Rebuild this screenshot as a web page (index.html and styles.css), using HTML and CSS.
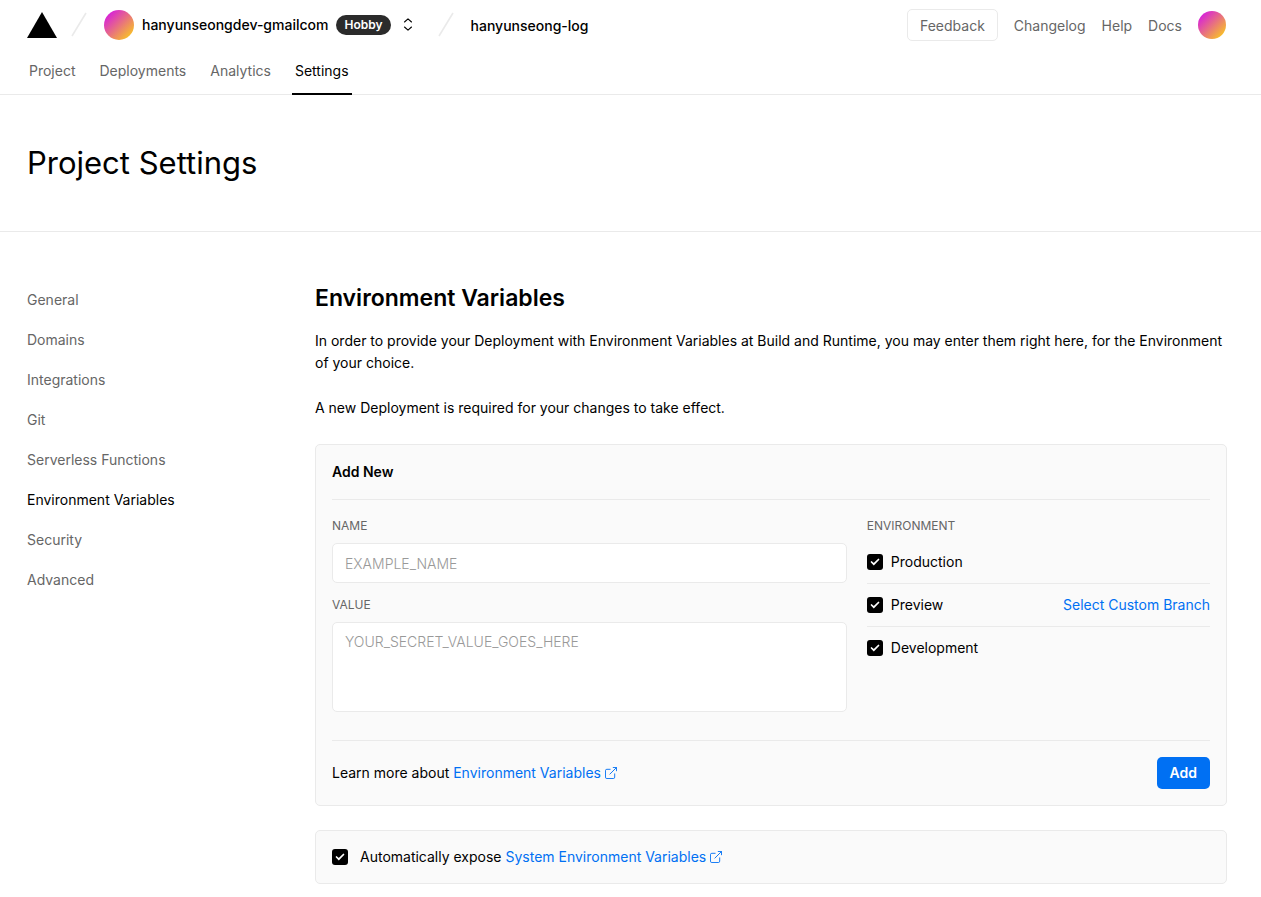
FILE: index.html
```
<!DOCTYPE html>
<html lang="en">
  <head>
    <meta charset="UTF-8" />
    <meta name="viewport" content="width=device-width, initial-scale=1.0" />
    <title>Project Settings</title>
    <link rel="stylesheet" href="styles.css">
  </head>
  <body>
    <header class="header">
      <div class="topbar">
        <a href="#" class="logo" aria-label="Home">
          <svg width="30" height="26" viewBox="0 0 30 26"><path d="M15 0L30 26H0z" fill="#000" /></svg>
        </a>
        <svg class="slash" width="16" height="26" viewBox="0 0 16 26"><path d="M15 1L1 24" stroke="#eaeaea" stroke-width="1.6" fill="none" /></svg>
        <a href="#" class="team">
          <span class="avatar"></span>
          <span>hanyunseongdev-gmailcom</span>
          <span class="badge">Hobby</span>
        </a>
        <button class="switcher" aria-label="Switch team">
          <svg width="10" height="14" viewBox="0 0 10 14" fill="none" stroke="#000" stroke-width="1.1" stroke-linecap="round" stroke-linejoin="round"><path d="M1.500 4L5 .8 8.500 4M1.500 9L5 12.200 8.500 9" /></svg>
        </button>
        <svg class="slash" width="16" height="26" viewBox="0 0 16 26"><path d="M15 1L1 24" stroke="#eaeaea" stroke-width="1.6" fill="none" /></svg>
        <a href="#" class="project">hanyunseong-log</a>
        <nav class="links">
          <button class="feedback">Feedback</button>
          <a href="#">Changelog</a>
          <a href="#">Help</a>
          <a href="#">Docs</a>
          <a href="#" class="avatar small" aria-label="Account"></a>
        </nav>
      </div>
      <nav class="tabs">
        <a href="#">Project</a>
        <a href="#">Deployments</a>
        <a href="#">Analytics</a>
        <a href="#" class="active">Settings</a>
      </nav>
    </header>

    <div class="title">
      <h1>Project Settings</h1>
    </div>

    <div class="layout">
      <nav class="sidebar">
        <a href="#">General</a>
        <a href="#">Domains</a>
        <a href="#">Integrations</a>
        <a href="#">Git</a>
        <a href="#">Serverless Functions</a>
        <a href="#" class="active">Environment Variables</a>
        <a href="#">Security</a>
        <a href="#">Advanced</a>
      </nav>

      <main>
        <h2>Environment Variables</h2>
        <p>In order to provide your Deployment with Environment Variables at Build and Runtime, you may enter them right here, for the Environment of your choice.</p>
        <p>A new Deployment is required for your changes to take effect.</p>

        <form class="card">
          <h3>Add New</h3>
          <div class="fields">
            <div class="inputs">
              <label class="label" for="name">NAME</label>
              <input type="text" id="name" placeholder="EXAMPLE_NAME" />
              <label class="label" for="value">VALUE</label>
              <textarea id="value" placeholder="YOUR_SECRET_VALUE_GOES_HERE"></textarea>
            </div>
            <div class="environments">
              <div class="label">ENVIRONMENT</div>
              <div class="env">
                <label><input type="checkbox" checked />Production</label>
              </div>
              <div class="env">
                <label><input type="checkbox" checked />Preview</label>
                <a href="#" class="link">Select Custom Branch</a>
              </div>
              <div class="env">
                <label><input type="checkbox" checked />Development</label>
              </div>
            </div>
          </div>
          <div class="card-footer">
            <span>Learn more about
              <a href="#" class="link">Environment Variables <svg class="external" width="12" height="12" viewBox="0 0 13 13"><path d="M10.500 7v4a1.500 1.500 0 0 1-1.500 1.500H2A1.500 1.500 0 0 1 .5 11V4A1.500 1.500 0 0 1 2 2.500h4M8.500.5h4v4M5 8L12.500.5" /></svg></a>
            </span>
            <button type="button" class="add">Add</button>
          </div>
        </form>

        <div class="card expose">
          <input type="checkbox" id="expose" checked />
          <label for="expose">Automatically expose
            <a href="#" class="link">System Environment Variables <svg class="external" width="12" height="12" viewBox="0 0 13 13"><path d="M10.500 7v4a1.500 1.500 0 0 1-1.500 1.500H2A1.500 1.500 0 0 1 .5 11V4A1.500 1.500 0 0 1 2 2.500h4M8.500.5h4v4M5 8L12.500.5" /></svg></a>
          </label>
        </div>
      </main>
    </div>
  </body>
</html>
```
FILE: styles.css
```
* {
  box-sizing: border-box;
}
body {
  margin: 0;
  background-color: #fff;
  color: #000;
  font-family: Inter, "Liberation Sans", sans-serif;
  font-size: 14px;
  line-height: 22px;
}
a {
  color: inherit;
  text-decoration: none;
}
button,
input,
textarea {
  font: inherit;
  margin: 0;
}
button {
  cursor: pointer;
}
.header {
  border-bottom: 1px solid #eaeaea;
}
.topbar {
  display: flex;
  align-items: center;
  height: 50px;
  padding: 0 35px 0 27px;
}
.logo,
.switcher {
  display: flex;
}
.slash {
  margin: 0 17px 0 14px;
}
.team {
  display: flex;
  align-items: center;
  gap: 8px;
  font-weight: 500;
}
.project {
  padding-top: 2px;
  font-weight: 500;
}
.avatar {
  width: 30px;
  height: 30px;
  border-radius: 50%;
  background: linear-gradient(135deg, #d61be0 10%, #f9c522 90%);
}
.small {
  width: 28px;
  height: 28px;
}
.badge {
  padding: 0 8px;
  border-radius: 10px;
  background-color: #2b2b2b;
  color: #fff;
  font-size: 12px;
  font-weight: 600;
  line-height: 20px;
}
.switcher {
  margin: 0 11px 0 12px;
  padding: 0;
  border: 0;
  background: none;
}
.links {
  display: flex;
  align-items: center;
  gap: 16px;
  margin-left: auto;
  color: #666;
}
.links a:not(.avatar) {
  padding-top: 2px;
}
.feedback {
  height: 32px;
  padding: 2px 12px 0;
  border: 1px solid #eaeaea;
  border-radius: 5px;
  background-color: #fff;
  color: #666;
}
.tabs {
  display: flex;
  gap: 18px;
  margin-bottom: -1px;
  padding: 0 26px;
  color: #666;
}
.tabs a {
  height: 45px;
  padding: 10px 3px;
}
.tabs .active {
  border-bottom: 2px solid #000;
  color: #000;
}
.title {
  padding: 48px 27px;
  border-bottom: 1px solid #eaeaea;
}
h1 {
  margin: 0;
  font-size: 31px;
  font-weight: 400;
  line-height: 40px;
}
.layout {
  display: grid;
  grid-template-columns: 264px 1fr;
  gap: 24px;
  padding: 48px 34px 13px 27px;
}
.sidebar {
  display: flex;
  flex-direction: column;
  color: #666;
}
.sidebar a {
  line-height: 40px;
}
.sidebar .active {
  color: #000;
}
h2 {
  margin: 0 0 14px;
  font-size: 23px;
  font-weight: 600;
  line-height: 36px;
}
p {
  margin: 0 0 23px;
}
.card {
  margin-top: 25px;
  padding: 16px;
  border: 1px solid #eaeaea;
  border-radius: 5px;
  background-color: #fafafa;
}
h3 {
  margin: 0;
  padding-bottom: 16px;
  border-bottom: 1px solid #eaeaea;
  font-size: 14px;
  font-weight: 600;
  line-height: 22px;
}
.fields {
  display: grid;
  grid-template-columns: 3fr 2fr;
  gap: 20px;
  padding: 16px 0 28px;
}
.inputs {
  display: flex;
  flex-direction: column;
}
.label {
  color: #666;
  font-size: 12px;
  line-height: 20px;
}
.inputs .label {
  margin-bottom: 7px;
}
input[type="text"],
textarea {
  width: 100%;
  padding: 8px 12px;
  border: 1px solid #eaeaea;
  border-radius: 5px;
  background-color: #fff;
}
input[type="text"] {
  height: 40px;
  margin-bottom: 12px;
}
textarea {
  height: 90px;
  resize: none;
}
::placeholder {
  color: #999;
  font-weight: 300;
}
input[type="checkbox"] {
  appearance: none;
  flex: none;
  width: 16px;
  height: 16px;
  border-radius: 3px;
  background: #000 url("data:image/svg+xml,%3Csvg xmlns='http://www.w3.org/2000/svg' viewBox='0 0 16 16'%3E%3Cpath d='M4.500 8l2.300 2.200 4.700-4.700' fill='none' stroke='%23fff' stroke-width='1.700' stroke-linecap='round'/%3E%3C/svg%3E");
}
.env {
  display: flex;
  align-items: center;
  justify-content: space-between;
  padding: 10px 0;
}
.env + .env {
  border-top: 1px solid #eaeaea;
}
.environments .label {
  margin-bottom: 5px;
}
.env label {
  display: flex;
  align-items: center;
  gap: 8px;
}
.link {
  color: #0070f3;
}
.external {
  vertical-align: -1px;
  fill: none;
  stroke: currentColor;
}
.card-footer {
  display: flex;
  align-items: center;
  justify-content: space-between;
  padding-top: 16px;
  border-top: 1px solid #eaeaea;
}
.add {
  height: 32px;
  padding: 0 13px;
  border: 0;
  border-radius: 5px;
  background-color: #0070f3;
  color: #fff;
  font-weight: 600;
}
.expose {
  display: flex;
  align-items: center;
  gap: 12px;
  margin-top: 24px;
  padding: 15px 16px;
}
```
